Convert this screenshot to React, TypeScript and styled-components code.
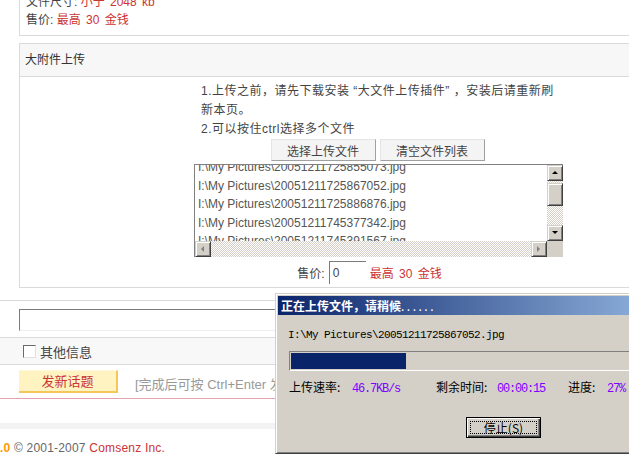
import React from "react";
import styled, { createGlobalStyle } from "styled-components";

const Global = createGlobalStyle`
  html, body { margin: 0; padding: 0; background: #fff; overflow: hidden; }
  body {
    font-family: "Liberation Sans", "Noto Sans CJK SC", sans-serif;
    font-size: 12px;
    color: #444;
  }
`;

const Page = styled.div`
  position: relative;
  width: 629px;
  height: 458px;
  overflow: hidden;
`;

const TopBox = styled.div`
  margin: -7px 0 0 19px;
  padding: 0 0 6px 6px;
  border-left: 1px solid #dadada;
  border-bottom: 1px solid #dadada;
  line-height: 18px;
`;

const Red = styled.span<{ $tight?: boolean }>`
  color: #c33;
  word-spacing: ${(p) => (p.$tight ? 0 : 2)}px;
`;

const UploadBox = styled.div`
  margin: 7px -200px 0 19px;
  border: 1px solid #dadada;
  border-right: none;
`;

const BoxHeader = styled.div`
  height: 32px;
  line-height: 32px;
  padding-left: 5px;
  background: #f7f7f7;
  border-bottom: 1px solid #dadada;
  color: #333;
`;

const BoxBody = styled.div`
  padding: 5px 0 4px 174px;
`;

const Column = styled.div`
  width: 369px;
`;

const Notes = styled.div`
  padding-left: 7px;
  line-height: 19px;
  color: #444;
  letter-spacing: 0.5px;
  white-space: nowrap;
`;

const ButtonRow = styled.div`
  display: flex;
  justify-content: center;
  gap: 4px;
  padding-right: 2px;
`;

const PlainButton = styled.button`
  width: 105px;
  height: 22px;
  padding: 0;
  font: inherit;
  font-size: 12px;
  color: #444;
  background: #f4f4f4;
  border: 1px solid;
  border-color: #e4e4e4 #a0a0a0 #a0a0a0 #e4e4e4;
`;

const ListBox = styled.div`
  margin-top: 3px;
  height: 93px;
  box-sizing: border-box;
  border-top: 1px solid #808080;
  border-left: 1px solid #808080;
  display: grid;
  grid-template-columns: 1fr 16px;
  grid-template-rows: 1fr 16px;
  background: #fff;
`;

const ListItems = styled.div`
  overflow: hidden;
  padding-left: 3px;
  color: #555;
`;

const ListLines = styled.div`
  margin-top: -7px;
  line-height: 18.5px;
  white-space: nowrap;
`;

const VScroll = styled.div`
  display: flex;
  flex-direction: column;
  background: repeating-conic-gradient(#d4d0c8 0 25%, #fff 0 50%) 0 0 / 2px 2px;
`;

const HScroll = styled.div`
  display: flex;
  background: repeating-conic-gradient(#d4d0c8 0 25%, #fff 0 50%) 0 0 / 2px 2px;
`;

const ScrollBtn = styled.div<{ $h?: number }>`
  width: 16px;
  height: ${(p) => p.$h ?? 16}px;
  flex: none;
  box-sizing: border-box;
  background: #d4d0c8;
  border: 1px solid;
  border-color: #d4d0c8 #404040 #404040 #d4d0c8;
  box-shadow: inset 1px 1px #fff, inset -1px -1px #808080;
  display: flex;
  align-items: center;
  justify-content: center;
`;

const Gap = styled.div<{ $h: number }>`
  height: ${(p) => p.$h}px;
  flex: none;
`;

const Spacer = styled.div`
  flex: 1;
`;

const Corner = styled.div`
  background: #d4d0c8;
`;

const PriceRow = styled.div`
  margin-top: 4px;
  display: flex;
  align-items: center;
  justify-content: center;
  gap: 4px;
  height: 22px;
  padding-right: 18px;
`;

const PriceInput = styled.div`
  width: 37px;
  height: 23px;
  box-sizing: border-box;
  border-top: 1px solid #7a7a7a;
  border-left: 1px solid #7a7a7a;
  padding: 3px 0 0 3px;
  color: #444;
  line-height: 16px;
`;

const RuleSection = styled.div`
  margin-top: 12px;
  border-top: 1px solid #dadada;
  padding: 8px 0 6px 19px;
`;

const TitleInput = styled.div`
  height: 20px;
  border-top: 1px solid #7a7a7a;
  border-left: 1px solid #7a7a7a;
  border-bottom: 1px solid #eee;
`;

const OptionsRow = styled.div`
  height: 26px;
  background: #f8f8f8;
  border-top: 1px solid #dadada;
  border-bottom: 1px solid #dadada;
  display: flex;
  align-items: center;
  padding-left: 23px;
  gap: 4px;
  font-size: 13px;
  color: #444;
`;

const CheckBox = styled.span`
  width: 11px;
  height: 11px;
  border: 1px solid;
  border-color: #6a6a6a #e0e0e0 #e0e0e0 #6a6a6a;
  background: #fff;
`;

const SubmitRow = styled.div`
  padding: 4px 0 5px 19px;
  display: flex;
  align-items: center;
  gap: 17px;
  border-bottom: 1px solid #e3a3b3;
`;

const SubmitButton = styled.div`
  width: 99px;
  height: 23px;
  box-sizing: border-box;
  background: #fff3c2;
  border-right: 2px solid #f5c75a;
  border-bottom: 2px solid #f5c75a;
  border-top: 1px solid #fff8dc;
  color: #c33;
  font-size: 13px;
  display: flex;
  align-items: center;
  justify-content: center;
`;

const Hint = styled.span`
  color: #999;
  font-size: 13px;
  padding-top: 5px;
`;

const Band = styled.div`
  margin-top: 24px;
  height: 6px;
  background: #f3f3f3;
`;

const Footer = styled.div`
  margin-top: 11px;
  line-height: 16px;
  font-size: 12px;
  letter-spacing: 0.2px;
  color: #666;
  white-space: nowrap;
`;

const Version = styled.b`
  color: #f90;
`;

/* ---- dialog window ---- */

const Dialog = styled.div`
  position: absolute;
  left: 275px;
  top: 293px;
  width: 447px;
  height: 161px;
  box-sizing: border-box;
  background: #d4d0c8;
  border: 1px solid;
  border-color: #d4d0c8 #404040 #404040 #d4d0c8;
  box-shadow: inset 1px 1px #fff, inset -1px -1px #808080;
  padding: 2px;
  font-family: "Noto Sans CJK SC", sans-serif;
  color: #000;
`;

const TitleBar = styled.div`
  height: 19px;
  line-height: 19px;
  padding-left: 3px;
  background: linear-gradient(to right, #0a246a, #a6caf0);
  color: #fff;
  font-weight: bold;
  font-size: 12px;
  white-space: nowrap;
`;

const Dots = styled.span`
  letter-spacing: 2.5px;
  font-weight: normal;
`;

const DialogBody = styled.div`
  padding: 10px 0 0 10px;
`;

const Mono = styled.span<{ $color?: string; $big?: boolean }>`
  font-family: "Liberation Mono", "Noto Sans CJK SC", monospace;
  font-size: ${(p) => (p.$big ? 12 : 11)}px;
  letter-spacing: ${(p) => (p.$big ? -1.2 : -0.6)}px;
  color: ${(p) => p.$color ?? "#000"};
`;

const PathLine = styled.div`
  line-height: 16px;
  white-space: nowrap;
`;

const Progress = styled.div`
  margin: 8px 0 0 1px;
  height: 20px;
  box-sizing: border-box;
  border: 1px solid;
  border-color: #808080 #fff #fff #808080;
  padding: 1px;
`;

const ProgressFill = styled.div`
  height: 100%;
  background: #0a246a;
`;

const Stats = styled.div`
  margin: 8px 0 0 1px;
  display: flex;
  line-height: 16px;
  white-space: nowrap;
  font-size: 12px;
`;

const Cell = styled.span<{ $w: number }>`
  width: ${(p) => p.$w}px;
  flex: none;
`;

const ButtonBar = styled.div`
  margin-top: 20px;
  display: flex;
  justify-content: center;
`;

const StopButton = styled.div`
  width: 75px;
  height: 21px;
  box-sizing: border-box;
  border: 1px solid #000;
  box-shadow: inset 1px 1px #fff, inset -1px -1px #404040, inset -2px -2px #808080;
  padding: 3px;
`;

const Focus = styled.div`
  height: 100%;
  box-sizing: border-box;
  border: 1px dotted #000;
  display: flex;
  align-items: center;
  justify-content: center;
  font-size: 12px;
  line-height: 12px;
`;

const Arrow = ({ dir }: { dir: "up" | "down" | "left" | "right" }) => {
  const pts: Record<string, string> = {
    up: "1,5 4,2 7,5",
    down: "1,2 4,5 7,2",
    left: "5,1 2,4 5,7",
    right: "2,1 5,4 2,7",
  };
  const color = dir === "up" || dir === "down" ? "#000" : "#808080";
  return (
    <svg width="8" height="8" viewBox="0 0 8 8">
      <polygon points={pts[dir]} fill={color} />
    </svg>
  );
};

const files = [
  "I:\\My Pictures\\20051211725855073.jpg",
  "I:\\My Pictures\\20051211725867052.jpg",
  "I:\\My Pictures\\20051211725886876.jpg",
  "I:\\My Pictures\\20051211745377342.jpg",
  "I:\\My Pictures\\20051211745391567.jpg",
];

export default function App() {
  return (
    <Page>
      <Global />
      <TopBox>
        <div>
          文件尺寸: <Red>小于 2048 kb</Red>
        </div>
        <div>
          售价: <Red>最高 30 金钱</Red>
        </div>
      </TopBox>

      <UploadBox>
        <BoxHeader>大附件上传</BoxHeader>
        <BoxBody>
          <Column>
            <Notes>
              1.上传之前，请先下载安装 “大文件上传插件” ，安装后请重新刷
              <br />
              新本页。
              <br />
              2.可以按住ctrl选择多个文件
            </Notes>
            <ButtonRow>
              <PlainButton>选择上传文件</PlainButton>
              <PlainButton>清空文件列表</PlainButton>
            </ButtonRow>
            <ListBox>
              <ListItems>
                <ListLines>
                  {files.map((f) => (
                    <div key={f}>{f}</div>
                  ))}
                </ListLines>
              </ListItems>
              <VScroll>
                <ScrollBtn>
                  <Arrow dir="up" />
                </ScrollBtn>
                <Gap $h={2} />
                <ScrollBtn $h={23} />
                <Spacer />
                <ScrollBtn>
                  <Arrow dir="down" />
                </ScrollBtn>
              </VScroll>
              <HScroll>
                <ScrollBtn>
                  <Arrow dir="left" />
                </ScrollBtn>
                <Spacer />
                <ScrollBtn>
                  <Arrow dir="right" />
                </ScrollBtn>
              </HScroll>
              <Corner />
            </ListBox>
            <PriceRow>
              <span>售价:</span>
              <PriceInput>0</PriceInput>
              <Red>最高 30 金钱</Red>
            </PriceRow>
          </Column>
        </BoxBody>
      </UploadBox>

      <RuleSection>
        <TitleInput />
      </RuleSection>
      <OptionsRow>
        <CheckBox />
        <span>其他信息</span>
      </OptionsRow>
      <SubmitRow>
        <SubmitButton>发新话题</SubmitButton>
        <Hint>[完成后可按 Ctrl+Enter 发布]</Hint>
      </SubmitRow>
      <Band />
      <Footer>
        <Version>.0</Version> © 2001-2007 <Red $tight>Comsenz Inc.</Red>
      </Footer>

      <Dialog>
        <TitleBar>
          正在上传文件，请稍候<Dots>......</Dots>
        </TitleBar>
        <DialogBody>
          <PathLine>
            <Mono>I:\My Pictures\20051211725867052.jpg</Mono>
          </PathLine>
          <Progress>
            <ProgressFill style={{ width: "27%" }} />
          </Progress>
          <Stats>
            <Cell $w={63}>上传速率:</Cell>
            <Cell $w={84}>
              <Mono $big $color="#8000ff">46.7KB/s</Mono>
            </Cell>
            <Cell $w={61}>剩余时间:</Cell>
            <Cell $w={71}>
              <Mono $big $color="#8000ff">00:00:15</Mono>
            </Cell>
            <Cell $w={39}>进度:</Cell>
            <Cell $w={40}>
              <Mono $big $color="#8000ff">27%</Mono>
            </Cell>
          </Stats>
          <ButtonBar>
            <StopButton>
              <Focus>停止(S)</Focus>
            </StopButton>
          </ButtonBar>
        </DialogBody>
      </Dialog>
    </Page>
  );
}
